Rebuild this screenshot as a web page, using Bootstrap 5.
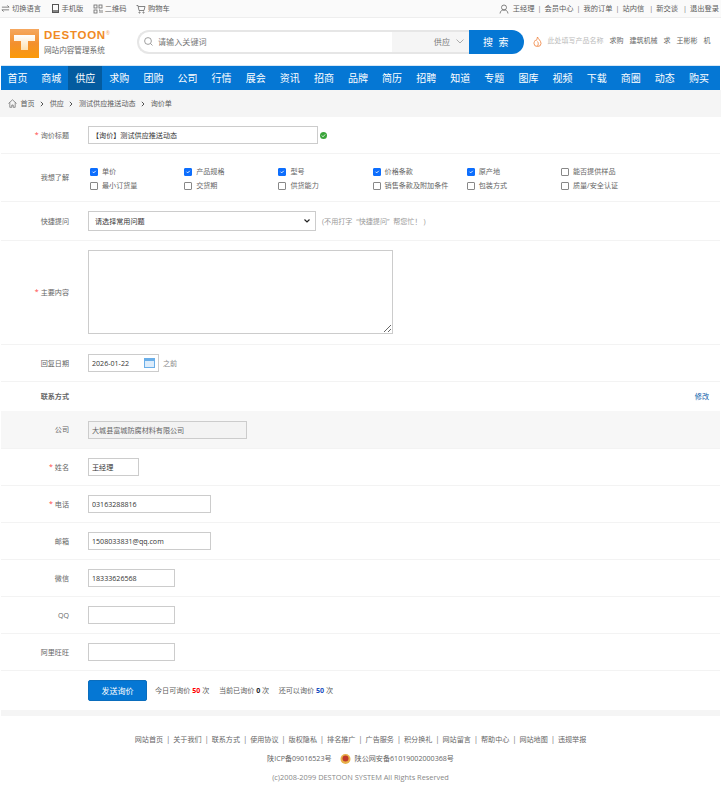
<!doctype html>
<html lang="zh-CN"><head><meta charset="utf-8"><title>询价单</title>
<link href="https://cdn.jsdelivr.net/npm/bootstrap@5.3.0/dist/css/bootstrap.min.css" rel="stylesheet">
<style>
body{font-family:"Open Sans","Noto Sans CJK SC",sans-serif;font-size:7.1px;line-height:1.2;color:#5c5c5c;background:#fff;width:721px;height:800px;overflow:hidden}
a,a:hover{color:inherit;text-decoration:none}
.topbar{height:18px;background:#fafafa;border-bottom:1px solid #eee;padding:0 2px 0 1px;font-size:7.25px}
.tb-i{margin-left:9.5px}
.tb-t{margin-left:2px}
.sep{color:#777;margin:0 3px}
.sep-w{margin-left:5px}
.head{height:47px;padding-left:10px}
.logo-mark{margin-top:3px;flex:none}
.logo-txt{width:93px;margin-left:5px;margin-top:2px;flex:none}
.logo-name{font:900 11.5px/1 "Liberation Sans",sans-serif;letter-spacing:.75px;color:#f08a24;white-space:nowrap}
.logo-name sup{font-size:5px;top:-4px;color:#f3b27a;letter-spacing:0}
.logo-sub{font-size:7.6px;color:#666;margin-top:4px}
.search{width:332px;height:24px;border:2px solid #e6e6e6;border-right:0;border-radius:12px 0 0 12px;overflow:hidden;flex:none}
.search-in{flex:1;padding-left:5px;gap:5px;color:#777;font-size:8.1px}
.search-cat{width:77px;background:#f5f5f5;height:100%;padding-right:5px;gap:6px;color:#777;font-size:8.1px;justify-content:flex-end}
.search-btn{width:55px;height:24px;background:#0577d4;color:#fff;border-radius:0 12px 12px 0;font-size:10px;letter-spacing:1.5px;flex:none}
.hot{margin-left:9px;gap:6px;color:#666;font-size:7px;white-space:nowrap}
.hot .ph{color:#bbb;margin-left:-.5px}
.mainnav{height:25px;margin:0 1px;background:#0577d4;border-top:1px solid #d8e8f5}
.mainnav a{width:34.1px;text-align:center;color:#fff;font-size:10px;line-height:24px;flex:none}
.mainnav a:first-child{width:33.1px}
.mainnav a.on{background:#045b9f}
.crumb{height:27px;background:#f5f5f5;padding-left:8px;gap:5.5px;color:#5c5c5c}
.crumb svg:first-child{margin-right:-2px}
.frow{display:flex;align-items:center;margin:0 1px;border-bottom:1px solid #f3f3f3;background:#fff}
.lab{width:68px;text-align:right;color:#666;flex:none;margin-right:19px}
.lab i{color:#f44;font-style:normal;margin-right:2px}
.fld{height:18px;border:1px solid #ccc;border-radius:0;background:#fff;padding:0 3px;font-size:7.1px;color:#333;flex:none;outline:0;font-family:inherit;display:block}
.fld-sel{width:228px;height:20px;padding:0 6px;appearance:none;-webkit-appearance:none;background:#fff url("data:image/svg+xml,%3Csvg xmlns='http://www.w3.org/2000/svg' width='6' height='4'%3E%3Cpath d='M.5.5L3 3 5.500.5' fill='none' stroke='%23222' stroke-width='1.200'/%3E%3C/svg%3E") no-repeat right 5px center}
.fld-date{display:flex;align-items:center;justify-content:space-between}
.fld-off{background:#f3f3f3;color:#666}
.ck{display:grid;grid-template-columns:repeat(6,94.2px);row-gap:5px;margin:2px 0 0 2px}
.ck label{display:flex;align-items:center;gap:4px;color:#666;height:9px;white-space:nowrap}
.ck .form-check-input{width:8px;height:8px;margin:0;border-radius:1px;border-color:#888;flex:none}
.ck .form-check-input:checked{background-color:#0d6efd;border-color:#0d6efd}
.hint{color:#999;margin-left:6px}
.ta{width:305px;height:84px;margin-bottom:2px;resize:both}
.sendbtn{width:59px;height:21px;background:#0577d4;color:#fff;border:1px solid #0a6dbd;border-radius:2px;font-size:8px;padding:0}
.stat{margin-left:8px}
.stat+.stat{margin-left:9.5px}
.blue-n{color:#1b4fbf}
.red-n{color:#f00}
.foot{height:90px;border-top:6px solid #f5f5f5;margin:0 1px;text-align:center;color:#666;padding-top:14px}
.foot-l{line-height:19px;height:19px}
.foot .s{margin:0 3.1px;color:#666}
.foot-c{font-size:7.4px;color:#888}
.chk-ok{margin-left:2px}
</style></head><body>
<div class="topbar d-flex align-items-center justify-content-between">
 <div class="d-flex align-items-center">
  <svg width="9" height="9" viewBox="0 0 10 9" fill="none" stroke="#555" stroke-width=".8"><path d="M1 3h8M7 1l2 2M9 6H1M3 8L1 6"/></svg>
  <span class="tb-t">切换语言</span>
  <svg class="tb-i" width="9" height="9" viewBox="0 0 9 9" fill="none" stroke="#555"><rect x="1.5" y=".5" width="6" height="8"/><path d="M2 7h5" stroke-width="1.4"/></svg>
  <span class="tb-t">手机版</span>
  <svg class="tb-i" width="10" height="10" viewBox="0 0 10 10" fill="none" stroke="#666" stroke-width=".8"><rect x="1" y="1" width="3" height="3"/><rect x="6" y="1" width="3" height="3"/><rect x="1" y="6" width="3" height="3"/><path d="M6 6h1v3M9 6v3"/></svg>
  <span class="tb-t">二维码</span>
  <svg class="tb-i" width="10" height="10" viewBox="0 0 10 10" fill="none" stroke="#666" stroke-width=".8"><path d="M.5 1.5h1.500l1 5h5l1-4H2.300"/><circle cx="3.500" cy="8.500" r=".6"/><circle cx="7.500" cy="8.500" r=".6"/></svg>
  <span class="tb-t">购物车</span>
 </div>
 <div class="d-flex align-items-center">
  <svg width="10" height="10" viewBox="0 0 10 10" fill="none" stroke="#666" stroke-width=".8"><circle cx="5" cy="3.500" r="2.500"/><path d="M1 9.500c.5-3 2-3.500 4-3.500s3.500.5 4 3.500"/></svg>
  <span class="ms-1">王经理</span><span class="sep">|</span><span>会员中心</span><span class="sep">|</span><span>我的订单</span><span class="sep">|</span><span>站内信</span><span class="sep sep-w">|</span><span>新交谈</span><span class="sep sep-w">|</span><span>退出登录</span>
 </div>
</div>
<div class="head d-flex align-items-center">
 <svg class="logo-mark" width="29" height="29" viewBox="0 0 29 29"><defs><linearGradient id="lg" x1="0" y1="0" x2="0" y2="1"><stop offset="0" stop-color="#f5a860"/><stop offset=".5" stop-color="#f3902e"/><stop offset="1" stop-color="#fb9a08"/></linearGradient><linearGradient id="lt" x1="0" y1="0" x2="0" y2="1"><stop offset="0" stop-color="#fff"/><stop offset="1" stop-color="#fde0b0"/></linearGradient></defs><rect width="29" height="29" fill="url(#lg)"/><path d="M4 6h21v6h-7v9h-7v-9H4z" fill="url(#lt)"/></svg>
 <div class="logo-txt">
  <div class="logo-name">DESTOON<sup>®</sup></div>
  <div class="logo-sub">网站内容管理系统</div>
 </div>
 <div class="search d-flex align-items-center">
  <div class="search-in d-flex align-items-center"><svg width="9" height="9" viewBox="0 0 9 9" fill="none" stroke="#888" stroke-width=".8"><circle cx="4" cy="4" r="3.400"/><path d="M6.500 6.500L8.500 8.500"/></svg><span>请输入关键词</span></div>
  <div class="search-cat d-flex align-items-center"><span>供应</span><svg width="8" height="5" viewBox="0 0 8 5" fill="none" stroke="#999" stroke-width=".8"><path d="M.5.5L4 4 7.500.5"/></svg></div>
 </div>
 <button type="button" class="search-btn border-0 p-0">搜 索</button>
 <div class="hot d-flex align-items-center">
  <svg width="9" height="11" viewBox="0 0 9 11" fill="none" stroke="#f08a4a" stroke-width=".9"><path d="M4.500 1C5 3 8 4.500 8 7.500a3.500 3 0 0 1-7 0C1 5.500 2 5 2.500 4 3 5 3.500 5 4.500 1zM4.500 5.500C5.500 7 5.500 8.500 4.500 10"/></svg>
  <span class="ph">此处填写产品名称</span><span>求购</span><span>建筑机械</span><span>求</span><span>王彬彬</span><span>机</span>
 </div>
</div>
<nav class="mainnav d-flex">
 <a href="#">首页</a><a href="#">商城</a><a href="#" class="on">供应</a><a href="#">求购</a><a href="#">团购</a><a href="#">公司</a><a href="#">行情</a><a href="#">展会</a><a href="#">资讯</a><a href="#">招商</a><a href="#">品牌</a><a href="#">简历</a><a href="#">招聘</a><a href="#">知道</a><a href="#">专题</a><a href="#">图库</a><a href="#">视频</a><a href="#">下载</a><a href="#">商圈</a><a href="#">动态</a><a href="#">购买</a>
</nav>
<div class="crumb d-flex align-items-center">
 <svg width="9" height="9" viewBox="0 0 9 9" fill="none" stroke="#666" stroke-width=".7"><path d="M.5 4.500L4.500.8l4 3.700M1.800 3.500V8.300h2V6h1.400v2.300h2V3.500"/></svg>
 <span>首页</span>
 <svg width="4" height="6" viewBox="0 0 4 6" fill="none" stroke="#555"><path d="M.8.8L3 3 .8 5.200"/></svg>
 <span>供应</span>
 <svg width="4" height="6" viewBox="0 0 4 6" fill="none" stroke="#555"><path d="M.8.8L3 3 .8 5.200"/></svg>
 <span>测试供应推送动态</span>
 <svg width="4" height="6" viewBox="0 0 4 6" fill="none" stroke="#555"><path d="M.8.8L3 3 .8 5.200"/></svg>
 <span>询价单</span>
</div>
<form>
 <div class="frow" style="height:37px"><div class="lab"><i>*</i>询价标题</div><input class="fld" style="width:230px" value="【询价】测试供应推送动态">
  <svg class="chk-ok" width="7" height="7" viewBox="0 0 7 7"><circle cx="3.500" cy="3.500" r="3.500" fill="#3aa53a"/><path d="M1.800 3.500l1.200 1.300 2.200-2.400" stroke="#fff" stroke-width=".8" fill="none"/></svg></div>
 <div class="frow" style="height:48px"><div class="lab">我想了解</div>
  <div class="ck">
   <label><input class="form-check-input" type="checkbox" checked>单价</label>
   <label><input class="form-check-input" type="checkbox" checked>产品规格</label>
   <label><input class="form-check-input" type="checkbox" checked>型号</label>
   <label><input class="form-check-input" type="checkbox" checked>价格条款</label>
   <label><input class="form-check-input" type="checkbox" checked>原产地</label>
   <label><input class="form-check-input" type="checkbox">能否提供样品</label>
   <label><input class="form-check-input" type="checkbox">最小订货量</label>
   <label><input class="form-check-input" type="checkbox">交货期</label>
   <label><input class="form-check-input" type="checkbox">供货能力</label>
   <label><input class="form-check-input" type="checkbox">销售条款及附加条件</label>
   <label><input class="form-check-input" type="checkbox">包装方式</label>
   <label><input class="form-check-input" type="checkbox">质量/安全认证</label>
  </div></div>
 <div class="frow" style="height:39px"><div class="lab">快捷提问</div><select class="fld fld-sel"><option>请选择常用问题</option></select><span class="hint">(不用打字 &nbsp;“快捷提问” &nbsp;帮您忙！ )</span></div>
 <div class="frow" style="height:104px"><div class="lab"><i>*</i>主要内容</div><textarea class="fld ta"></textarea></div>
 <div class="frow" style="height:37px"><div class="lab">回复日期</div><div class="fld fld-date" style="width:71px">2026-01-22<svg width="11" height="10" viewBox="0 0 11 10"><rect x=".5" y=".5" width="10" height="9" fill="#dcecfb" stroke="#6aaee8"/><rect x=".5" y=".5" width="10" height="2.500" fill="#6aaee8"/></svg></div><span class="ms-1" style="color:#888">之前</span></div>
 <div class="frow border-0 justify-content-between" style="height:29px"><div class="lab fw-bold">联系方式</div><a href="#" style="color:#0a5aa8;padding-right:11px">修改</a></div>
 <div class="frow" style="height:38px;background:#f7f7f7"><div class="lab">公司</div><input class="fld fld-off" style="width:159px" value="大城县富城防腐材料有限公司" readonly></div>
 <div class="frow" style="height:37px"><div class="lab"><i>*</i>姓名</div><input class="fld" style="width:51px" value="王经理"></div>
 <div class="frow" style="height:37px"><div class="lab"><i>*</i>电话</div><input class="fld" style="width:123px" value="03163288816"></div>
 <div class="frow" style="height:37px"><div class="lab">邮箱</div><input class="fld" style="width:123px" value="1508033831@qq.com"></div>
 <div class="frow" style="height:37px"><div class="lab">微信</div><input class="fld" style="width:87px" value="18333626568"></div>
 <div class="frow" style="height:37px"><div class="lab">QQ</div><input class="fld" style="width:87px"></div>
 <div class="frow" style="height:37px"><div class="lab">阿里旺旺</div><input class="fld" style="width:87px"></div>
 <div class="frow border-0" style="height:39px"><div class="lab"></div><button type="button" class="sendbtn">发送询价</button>
  <span class="stat">今日可询价 <b class="red-n">50</b> 次</span><span class="stat">当前已询价 <b class="text-dark">0</b> 次</span><span class="stat">还可以询价 <b class="blue-n">50</b> 次</span></div>
</form>
<footer class="foot">
 <div class="foot-l">网站首页<span class="s">|</span>关于我们<span class="s">|</span>联系方式<span class="s">|</span>使用协议<span class="s">|</span>版权隐私<span class="s">|</span>排名推广<span class="s">|</span>广告服务<span class="s">|</span>积分换礼<span class="s">|</span>网站留言<span class="s">|</span>帮助中心<span class="s">|</span>网站地图<span class="s">|</span>违规举报</div>
 <div class="foot-l d-flex justify-content-center align-items-center">陕ICP备09016523号<svg class="ms-2 me-1" width="11" height="12" viewBox="0 0 11 12"><circle cx="5.500" cy="6" r="5" fill="#e8b04a"/><circle cx="5.500" cy="5.500" r="3" fill="#c0392b"/></svg>陕公网安备61019002000368号</div>
 <div class="foot-l foot-c">(c)2008-2099 DESTOON SYSTEM All Rights Reserved</div>
</footer>
</body></html>
